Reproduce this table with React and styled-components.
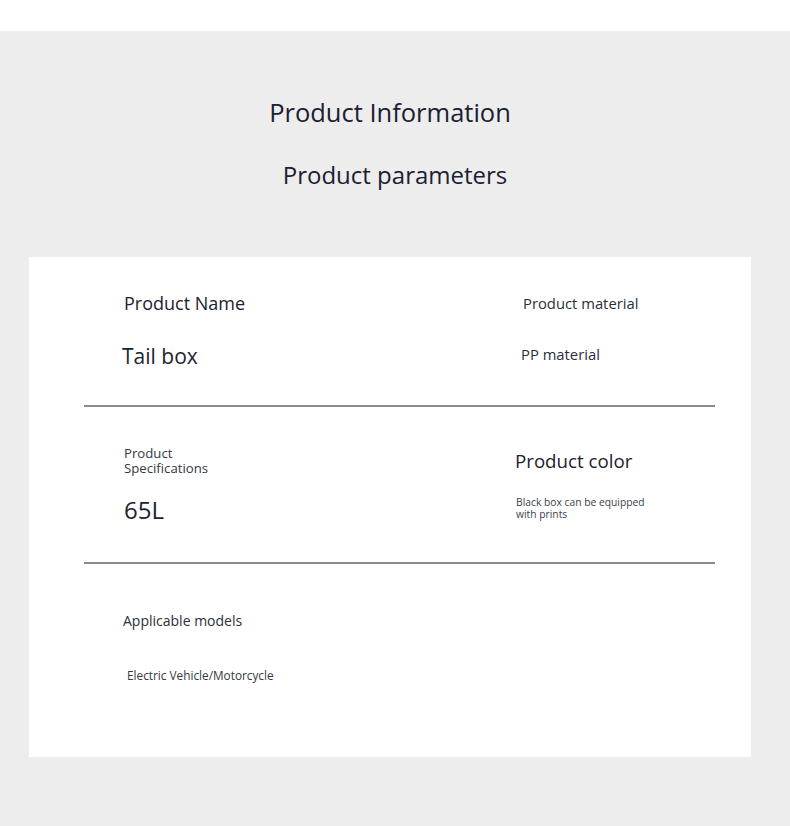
import styled, { createGlobalStyle } from "styled-components";

const GlobalStyle = createGlobalStyle`
  body {
    margin: 0;
    background: #ededed;
    font-family: "Open Sans", "Noto Sans", sans-serif;
    color: #1c2230;
  }
`;

function App() {
    return (
        <>
            <GlobalStyle />
            <TopStrip />
            <Page>
                <Title $size={25.5} $shift={-5}>Product Information</Title>
                <Title $size={24} $mt={31}>Product parameters</Title>
                <Card>
                    <Row $height={148}>
                        <Cell $indent={95} $top={35}>
                            <Text $size={18}>Product Name</Text>
                            <Text $size={21} $mt={30} $ml={-2}>Tail box</Text>
                        </Cell>
                        <Cell $indent={8} $top={37}>
                            <Text $size={14.8} $lh={18} $color="#2a2f3a">Product material</Text>
                            <Text $size={14.8} $lh={18} $mt={33} $ml={-2} $color="#2a2f3a">PP material</Text>
                        </Cell>
                    </Row>
                    <Divider />
                    <Row $height={155}>
                        <Cell $indent={95} $top={39}>
                            <Text $size={13.2} $lh={15} $color="#333842">Product<br />Specifications</Text>
                            <Text $size={24} $lh={30} $mt={19}>65L</Text>
                        </Cell>
                        <Cell $indent={0} $top={42}>
                            <Text $size={18.7} $lh={23}>Product color</Text>
                            <Text $size={10.3} $lh={12} $mt={24} $ml={1} $color="#3a3f48">Black box can be equipped<br />with prints</Text>
                        </Cell>
                    </Row>
                    <Divider />
                    <Row $height={193}>
                        <Cell $indent={94} $top={48}>
                            <Text $size={14} $lh={18} $color="#2a2f3a">Applicable models</Text>
                            <Text $size={11.8} $lh={14} $mt={38} $ml={4} $color="#333842">Electric Vehicle/Motorcycle</Text>
                        </Cell>
                    </Row>
                </Card>
            </Page>
        </>
    )
}

export default App

const TopStrip = styled.div`
  height: 31px;
  background: #ffffff;
`;

const Page = styled.div`
  display: flex;
  flex-direction: column;
  align-items: center;
  padding: 65px 0 69px;
`;

const Title = styled.h2`
  margin: ${p => p.$mt || 0}px 0 0;
  font-size: ${p => p.$size}px;
  line-height: 32px;
  font-weight: 400;
  color: #1b2130;
  transform: translateX(${p => p.$shift || 0}px);
`;

const Card = styled.div`
  align-self: stretch;
  margin: 66px 39px 0 29px;
  background: #ffffff;
  display: flex;
  flex-direction: column;
`;

const Row = styled.div`
  display: grid;
  grid-template-columns: 486px 1fr;
  height: ${p => p.$height}px;
`;

const Cell = styled.div`
  display: flex;
  flex-direction: column;
  align-items: flex-start;
  padding: ${p => p.$top}px 0 0 ${p => p.$indent}px;
`;

const Text = styled.div`
  font-size: ${p => p.$size}px;
  line-height: ${p => p.$lh || Math.round(p.$size * 1.2)}px;
  margin: ${p => p.$mt || 0}px 0 0 ${p => p.$ml || 0}px;
  color: ${p => p.$color || "#1c2230"};
`;

const Divider = styled.div`
  height: 2px;
  margin: 0 36px 0 55px;
  background: #8a8a8a;
`;
